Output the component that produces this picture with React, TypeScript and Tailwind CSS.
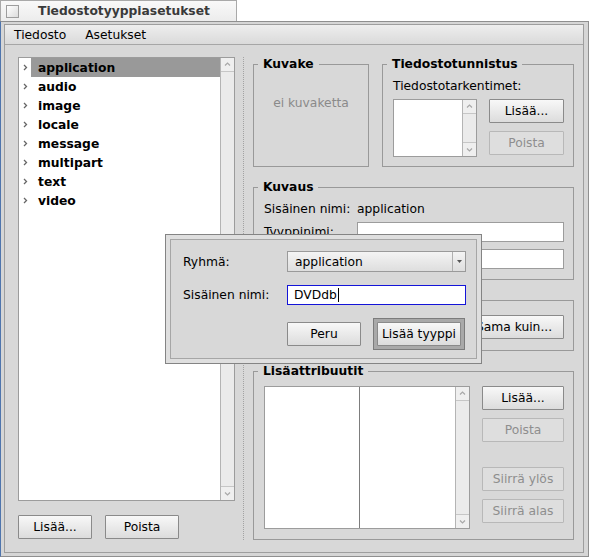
import type { ReactNode } from "react";

const mimeGroups = [
  "application",
  "audio",
  "image",
  "locale",
  "message",
  "multipart",
  "text",
  "video",
];

function Chevron({ dir }: { dir: "up" | "down" | "right" }) {
  if (dir === "right") {
    return (
      <svg width="5" height="7" viewBox="0 0 5 7">
        <path d="M1 1l2.5 2.5L1 6" fill="none" stroke="#666" strokeWidth="1.3" />
      </svg>
    );
  }
  return (
    <svg width="7" height="5" viewBox="0 0 7 5">
      <path
        d={dir === "up" ? "M1 3.5l2.5-2.5 2.5 2.5" : "M1 1.5l2.5 2.5 2.5-2.5"}
        fill="none"
        stroke="#a8a8a8"
        strokeWidth="1.2"
      />
    </svg>
  );
}

function ScrollBar() {
  return (
    <div className="flex w-[14px] flex-col border-l border-[#b4b4b4] bg-[#ebebeb]">
      <div className="flex h-[14px] items-center justify-center border-b border-[#c6c6c6] bg-[#efefef]">
        <Chevron dir="up" />
      </div>
      <div className="flex-1" />
      <div className="flex h-[14px] items-center justify-center border-t border-[#c6c6c6] bg-[#efefef]">
        <Chevron dir="down" />
      </div>
    </div>
  );
}

function Button({
  children,
  disabled = false,
  className = "",
}: {
  children: ReactNode;
  disabled?: boolean;
  className?: string;
}) {
  return (
    <button
      type="button"
      className={`flex h-[24px] shrink-0 items-center justify-center rounded-[1px] border ${
        disabled
          ? "border-[#b8b8b8] bg-[#dedede] text-[#8e8e8e]"
          : "border-[#8a8a8a] bg-linear-to-b from-[#f8f8f8] to-[#dcdcdc] text-black"
      } ${className}`}
    >
      {children}
    </button>
  );
}

function Group({
  title,
  className = "",
  children,
}: {
  title: string;
  className?: string;
  children: ReactNode;
}) {
  return (
    <fieldset className={`min-w-0 border border-[#999999] ${className}`}>
      <legend className="ml-[4px] px-[5px] font-bold leading-[14px]">
        {title}
      </legend>
      {children}
    </fieldset>
  );
}

function TextField({ className = "" }: { className?: string }) {
  return (
    <div className={`h-[20px] border border-[#9c9c9c] bg-white ${className}`} />
  );
}

function MenuField({ value, className = "" }: { value: string; className?: string }) {
  return (
    <div
      className={`flex h-[21px] border border-[#9a9a9a] bg-linear-to-b from-[#f4f4f4] to-[#dedede] ${className}`}
    >
      <span className="flex flex-1 items-center pl-[7px]">{value}</span>
      <span className="flex w-[13px] items-center justify-center border-l border-[#b0b0b0]">
        <svg width="5" height="3" viewBox="0 0 5 3">
          <path d="M0 0h5L2.5 3z" fill="#555" />
        </svg>
      </span>
    </div>
  );
}

function TitleTab() {
  return (
    <div className="flex h-[21px] w-[237px] items-center border border-b-0 border-[#a9a9a9] bg-linear-to-b from-[#f9f9f9] to-[#ececec]">
      <div className="ml-[5px] h-[13px] w-[13px] border border-[#9d9d9d] bg-linear-to-br from-white to-[#dcdcdc]" />
      <span className="ml-[19px] font-bold text-[#3a3a3a]">
        Tiedostotyyppiasetukset
      </span>
    </div>
  );
}

function TypeList() {
  return (
    <div className="flex h-[444px] w-[217px] border border-[#9c9c9c] bg-white">
      <div className="flex flex-1 flex-col">
        {mimeGroups.map((group, i) => (
          <div key={group} className="flex h-[19px] items-center">
            <span className="flex w-[12px] justify-center">
              <Chevron dir="right" />
            </span>
            <span
              className={`flex h-full flex-1 items-center pl-[7px] font-bold ${
                i === 0 ? "bg-[#999999]" : ""
              }`}
            >
              {group}
            </span>
          </div>
        ))}
      </div>
      <ScrollBar />
    </div>
  );
}

function AddTypeDialog() {
  return (
    <div className="absolute left-[165px] top-[234px] flex h-[130px] w-[317px] flex-col border border-[#848484] bg-[#dfdfdf] p-[4px]">
      <div className="flex flex-1 flex-col border border-[#a6a6a6] bg-[#d8d8d8] pl-[12px] pt-[11px]">
        <div className="flex items-center">
          <span className="w-[104px]">Ryhmä:</span>
          <MenuField value="application" className="w-[179px]" />
        </div>
        <div className="mt-[13px] flex items-center">
          <span className="w-[104px]">Sisäinen nimi:</span>
          <div className="flex h-[20px] w-[179px] items-center border border-[#1414d8] bg-white pl-[6px]">
            DVDdb
            <span className="ml-px h-[14px] w-px bg-black" />
          </div>
        </div>
        <div className="mt-[13px] flex items-center pl-[104px]">
          <Button className="w-[74px]">Peru</Button>
          <div className="ml-[12px] border border-[#7c7c7c] bg-[#a9a9a9] p-[3px]">
            <Button className="w-[84px] border-[#6e6e6e]">Lisää tyyppi</Button>
          </div>
        </div>
      </div>
    </div>
  );
}

export default function App() {
  return (
    <div className="relative flex h-[557px] w-[590px] flex-col overflow-hidden bg-white font-['DejaVu_Sans',sans-serif] text-[12.3px] leading-[14px] text-black">
      <TitleTab />
      <div className="flex w-[589px] flex-1 flex-col border border-[#8f8f8f] border-l-[#4f75ad] bg-[#d6d6d6] pb-[3px] pl-[3px] pr-[4px] pt-[2px]">
        <div className="flex flex-1 flex-col border border-[#9e9e9e]">
          <div className="flex h-[20px] items-center gap-[19px] border-b border-[#a6a6a6] bg-linear-to-b from-[#eeeeee] to-[#dadada] pl-[9px]">
            <span>Tiedosto</span>
            <span>Asetukset</span>
          </div>

          <div className="flex flex-1 bg-[#d8d8d8] pb-[12px] pl-[13px] pr-[9px] pt-[12px]">
            <div className="flex w-[217px] flex-col">
              <TypeList />
              <div className="mt-[14px] flex gap-[13px]">
                <Button className="w-[74px]">Lisää...</Button>
                <Button className="w-[74px]">Poista</Button>
              </div>
            </div>

            <div className="ml-[8px] mr-[9px] border-l border-dotted border-[#a3a3a3]" />

            <div className="flex flex-1 flex-col gap-[13px]">
              <div className="flex gap-[13px]">
                <Group title="Kuvake" className="w-[116px]">
                  <div className="flex h-[95px] items-start justify-center pt-[25px] text-[#8a8a8a]">
                    ei kuvaketta
                  </div>
                </Group>
                <Group title="Tiedostotunnistus" className="flex-1">
                  <div className="pb-[9px] pl-[10px] pr-[9px] pt-[8px]">
                    <div className="h-[14px]">Tiedostotarkentimet:</div>
                    <div className="mt-[6px] flex gap-[12px]">
                      <div className="flex h-[58px] w-[84px] border border-[#9c9c9c] bg-white">
                        <div className="flex-1" />
                        <ScrollBar />
                      </div>
                      <div className="flex flex-1 flex-col gap-[8px]">
                        <Button className="border-[#6f6f6f]">Lisää...</Button>
                        <Button disabled>Poista</Button>
                      </div>
                    </div>
                  </div>
                </Group>
              </div>

              <Group title="Kuvaus">
                <div className="flex flex-col pb-[10px] pl-[10px] pr-[9px] pt-[8px]">
                  <div className="flex h-[14px] items-center">
                    <span className="w-[93px]">Sisäinen nimi:</span>
                    <span>application</span>
                  </div>
                  <div className="mt-[6px] flex items-center">
                    <span className="w-[93px]">Tyyppinimi:</span>
                    <TextField className="flex-1" />
                  </div>
                  <div className="mt-[7px] flex items-center">
                    <span className="w-[93px]">Kuvaus:</span>
                    <TextField className="flex-1" />
                  </div>
                </div>
              </Group>

              <Group title="Ensisijainen sovellus">
                <div className="flex items-center gap-[8px] pb-[11px] pl-[10px] pr-[9px] pt-[8px]">
                  <MenuField value="" className="flex-1" />
                  <Button className="w-[80px]">Valitse...</Button>
                  <Button className="w-[100px]">Sama kuin...</Button>
                </div>
              </Group>

              <Group title="Lisäattribuutit">
                <div className="flex gap-[12px] pb-[10px] pl-[10px] pr-[9px] pt-[8px]">
                  <div className="flex h-[143px] w-[206px] border border-[#9c9c9c] bg-white">
                    <div className="w-[95px] border-r border-[#7d7d7d]" />
                    <div className="flex-1" />
                    <ScrollBar />
                  </div>
                  <div className="flex flex-1 flex-col">
                    <Button className="border-[#6f6f6f]">Lisää...</Button>
                    <Button disabled className="mt-[8px]">
                      Poista
                    </Button>
                    <Button disabled className="mt-[25px]">
                      Siirrä ylös
                    </Button>
                    <Button disabled className="mt-[8px]">
                      Siirrä alas
                    </Button>
                  </div>
                </div>
              </Group>
            </div>
          </div>
        </div>
      </div>
      <AddTypeDialog />
    </div>
  );
}
